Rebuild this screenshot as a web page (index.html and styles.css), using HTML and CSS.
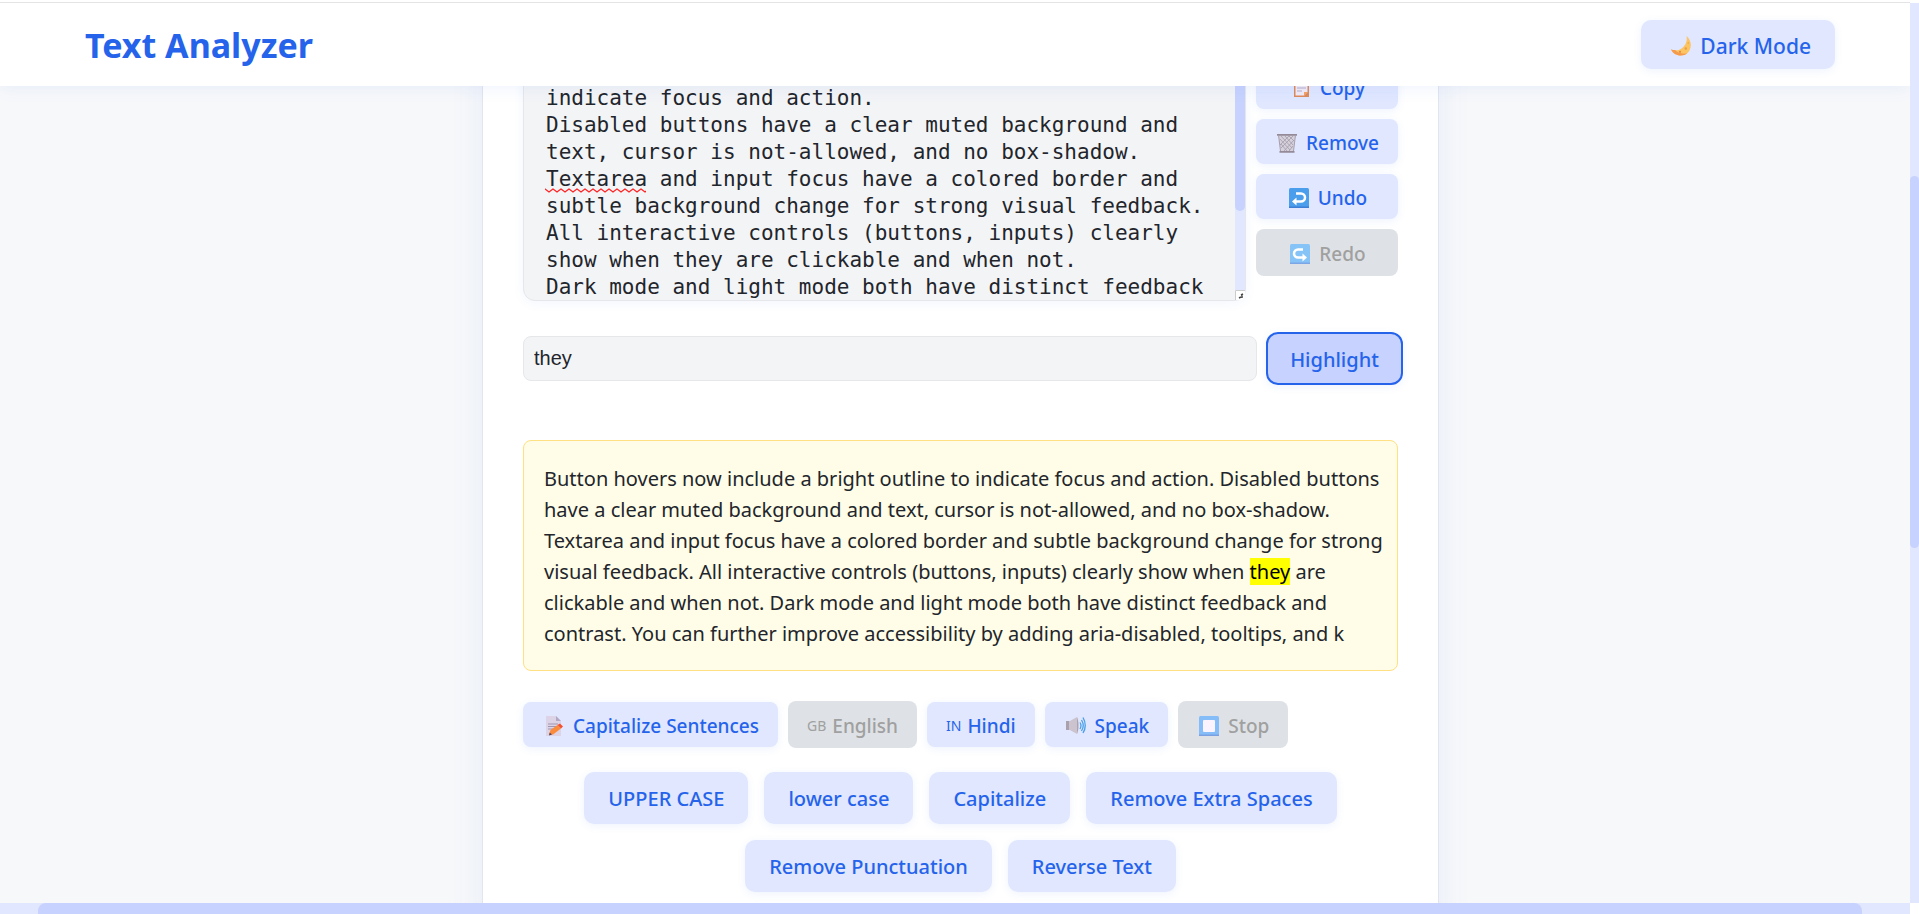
FILE: index.html
```html
<!DOCTYPE html>
<html lang="en">
<head>
<meta charset="utf-8">
<title>Text Analyzer</title>
<link rel="stylesheet" href="styles.css">
</head>
<body>
<div class="window">
  <div class="view">
    <header class="header">
      <h1 class="brand">Text Analyzer</h1>
      <button class="btn btn-theme" type="button">
        <svg class="icon" viewBox="0 0 20 20" aria-hidden="true"><path d="M15.5 0C18.500 2.500 20 6 19.800 9.500 19.500 15.300 15.500 19.500 9.800 19.500 5.300 19.500 1.800 17.300 0 13.500c4 1.500 8.600 1 11.800-2C15 8.500 16.500 4.500 15.500 0z" fill="#fcc462"/><path d="M0 13.500c1.800 3.800 5.300 6 9.800 6 2.500 0 4.800-.8 6.500-2.200-4.500 1-9.500 0-12.300-3.200-1.500 0-2.800-.1-4-.6z" fill="#f59a4c"/><circle cx="14.800" cy="12.500" r="1.200" fill="#e9a04a"/><circle cx="9" cy="15.800" r="1.100" fill="#e58c3f"/><circle cx="17.300" cy="7" r=".9" fill="#eeae55"/></svg>
        Dark Mode
      </button>
    </header>
    <main class="main">
      <section class="card">
        <div class="editor">
          <div class="editor-field">
            <textarea class="editor-text" aria-label="Text to analyze" spellcheck="false">Button hovers now include a bright outline to
indicate focus and action.
Disabled buttons have a clear muted background and
text, cursor is not-allowed, and no box-shadow.
Textarea and input focus have a colored border and
subtle background change for strong visual feedback.
All interactive controls (buttons, inputs) clearly
show when they are clickable and when not.
Dark mode and light mode both have distinct feedback</textarea>
            <svg class="squiggle" aria-hidden="true"><defs><pattern id="wave" width="8" height="5" patternUnits="userSpaceOnUse"><path d="M-1 0L0 1 4 4 8 1 9 0" fill="none" stroke="#f22" stroke-width="1.300"/></pattern></defs><rect width="100%" height="5" fill="url(#wave)"/></svg>
            <div class="editor-scroll"><div class="editor-thumb"></div></div>
            <svg class="grip" viewBox="0 0 10 10" aria-hidden="true"><path d="M0 0h10v4a6 6 0 0 1-6 6H0z" fill="#fff"/><path d="M.5 10V.5H10" fill="none" stroke="#ccc"/><path d="M4 8l2-1M6 5l2-1M7 8V5.500" stroke="#444" stroke-width="1.500"/></svg>
          </div>
          <div class="tools">
            <button class="btn btn-small" type="button"><svg class="icon" viewBox="0 0 20 20" aria-hidden="true"><path d="M3 1h15v18H3z" fill="#dc8a5b"/><path d="M4.500 2.500h12V14L13 17.500H4.500z" fill="#f1ebf7"/><path d="M6 7h9M6 10h9M6 13h5" stroke="#b7adc8"/><path d="M13 18v-4h4z" fill="#f5a164"/></svg>Copy</button>
            <button class="btn btn-small" type="button"><svg class="icon" viewBox="0 0 20 20" aria-hidden="true"><path d="M1.500 2h17l-2 16h-13z" fill="#d5d0da"/><path d="M4 3l11 12M8 3l8 9M12 3l5 5M3 6l10 11M4 11l6 7M16 3L4 15M12 3L3 12M17 7L7 18M16 13l-4 5" stroke="#a29aa9" stroke-width=".8"/><path d="M0 1.800h20M2.500 18.800h15" stroke="#948b99" stroke-width="1.800"/><path d="M1.500 2l2 16M18.500 2l-2 16" stroke="#a79eac"/></svg>Remove</button>
            <button class="btn btn-small" type="button"><svg class="icon" viewBox="0 0 20 20" aria-hidden="true"><rect width="20" height="20" rx="1.500" fill="#4b9eeb"/><path d="M0 18.500h20V20H0z" fill="#3c7fd4"/><path d="M7 5.500h5a3.500 3.500 0 0 1 0 8H6" fill="none" stroke="#fff" stroke-width="2.500"/><path d="M3 13.500l4.500-4v8z" fill="#fff"/></svg>Undo</button>
            <button class="btn btn-small" type="button" disabled><svg class="icon" viewBox="0 0 20 20" aria-hidden="true"><rect width="20" height="20" rx="1.500" fill="#86c4f8"/><path d="M0 18.500h20V20H0z" fill="#7da6e6"/><path d="M13 5.500H8a3.500 3.500 0 0 0 0 8h6" fill="none" stroke="#fff" stroke-width="2.500"/><path d="M17 13.500l-4.500-4v8z" fill="#fff"/></svg>Redo</button>
          </div>
        </div>
        <form class="search" onsubmit="return false">
          <input class="search-input" type="text" value="they" aria-label="Word to highlight" spellcheck="false">
          <button class="btn btn-highlight" type="button">Highlight</button>
        </form>
        <p class="result">Button hovers now include a bright outline to indicate focus and action. Disabled buttons<br>have a clear muted background and text, cursor is not-allowed, and no box-shadow.<br>Textarea and input focus have a colored border and subtle background change for strong<br>visual feedback. All interactive controls (buttons, inputs) clearly show when <mark class="hit">they</mark> are<br>clickable and when not. Dark mode and light mode both have distinct feedback and<br>contrast. You can further improve accessibility by adding aria-disabled, tooltips, and k</p>
        <div class="actions">
          <button class="btn btn-small" type="button"><svg class="icon" viewBox="0 0 20 20" aria-hidden="true"><path d="M2 0h10l5 5v15H2z" fill="#dcd4e6"/><path d="M12 0l5 5h-5z" fill="#b3a8c4"/><path d="M4 8h10M4 10.500h9M4 13h5" stroke="#a095b0"/><path d="M5 19l1.500-5 7-5 3.500 3.500-8 6z" fill="#fb8b3c"/><path d="M13.500 9l2.500-1.500 3 3-2 2z" fill="#f4512f"/><path d="M5 19.500l.7-3 2.300 2z" fill="#59425a"/></svg>Capitalize Sentences</button>
          <button class="btn btn-small" type="button" disabled><span class="flag">GB</span>English</button>
          <button class="btn btn-small" type="button"><span class="flag">IN</span>Hindi</button>
          <button class="btn btn-small" type="button"><svg class="icon" viewBox="0 0 20 20" aria-hidden="true"><path d="M0 5h4l7-4v17l-7-4H0z" fill="#cbc3ce"/><path d="M0 5h3v9H0z" fill="#aaa1ad"/><path d="M11 1v17c2-4 2-13 0-17z" fill="#aba3b2"/><path d="M14 6.500q2 3 0 6.500M15.500 4q3.500 5.500 0 11M17 1.500q4.500 8 0 15.500" fill="none" stroke="#479fe9" stroke-width="1.300"/></svg>Speak</button>
          <button class="btn btn-small" type="button" disabled><svg class="icon" viewBox="0 0 20 20" aria-hidden="true"><rect width="20" height="20" rx="1.500" fill="#84bdf7"/><path d="M0 18.500h20V20H0z" fill="#7ba0e2"/><rect x="4" y="4" width="12" height="12" rx="1" fill="#fbf3fd"/></svg>Stop</button>
        </div>
        <div class="transforms">
          <button class="btn" type="button">UPPER CASE</button>
          <button class="btn" type="button">lower case</button>
          <button class="btn" type="button">Capitalize</button>
          <button class="btn" type="button">Remove Extra Spaces</button>
          <button class="btn" type="button">Remove Punctuation</button>
          <button class="btn" type="button">Reverse Text</button>
        </div>
      </section>
    </main>
  </div>
  <div class="vbar"><div class="vbar-thumb"></div></div>
  <div class="hbar"><div class="hbar-thumb"></div></div>
</div>
</body>
</html>
```
FILE: styles.css
```css
* { box-sizing: border-box; }

body {
  margin: 0;
  background: #fff;
  color: #22252b;
  font-family: "Noto Sans", "Open Sans", sans-serif;
}

.window {
  display: grid;
  grid-template-columns: minmax(0, 1fr) 9px;
  grid-template-rows: minmax(0, 1fr) 11px;
  height: 100vh;
  padding-top: 2px;
}

.view {
  display: flex;
  flex-direction: column;
  overflow: hidden;
  border-top: 1px solid #e3e4e6;
  background: #f7f8fa;
}

.header {
  position: relative;
  z-index: 1;
  display: flex;
  flex: none;
  align-items: center;
  justify-content: space-between;
  padding: 17px 75px 17px 85px;
  background: #fff;
  box-shadow: 0 2px 16px rgba(37, 99, 235, 0.08);
}

.brand {
  margin: 0;
  color: #2563eb;
  font-size: 34px;
  line-height: 44px;
  font-weight: 700;
}

.main {
  flex: 1;
  min-height: 0;
  padding-left: 11px;
}

.card {
  max-width: 957px;
  min-height: 100%;
  margin: -91px auto 0;
  padding: 40px;
  border: 1px solid #e1e6ee;
  background: #fff;
  box-shadow: 0 4px 32px rgba(37, 99, 235, 0.08);
}

.btn {
  display: inline-flex;
  align-items: center;
  justify-content: center;
  gap: 9px;
  padding: 13px 24px 11px;
  border: 0;
  border-radius: 10px;
  background: #e0e7ff;
  box-shadow: 0 2px 8px rgba(37, 99, 235, 0.08);
  color: #2563eb;
  font-family: inherit;
  font-size: 20px;
  line-height: 28px;
  font-weight: 500;
  white-space: nowrap;
}

.btn-theme {
  padding: 12px 24px 9px 28px;
  font-size: 21px;
}

.btn-small {
  padding: 11px 19px 8px;
  border-radius: 8px;
  font-size: 19px;
  line-height: 26px;
}

.btn:disabled {
  padding-top: 12px;
  padding-bottom: 9px;
  background: #dee2e6;
  box-shadow: none;
  color: #a0a0a0;
}

.icon {
  flex: none;
  width: 20px;
  height: 20px;
  margin-left: 2px;
}

.flag {
  margin-right: -3px;
  font-size: 14px;
  font-weight: 400;
}

.editor {
  display: flex;
  align-items: flex-end;
  gap: 10px;
}

.editor-field {
  position: relative;
  flex: 1;
}

.editor-text {
  display: block;
  width: 100%;
  height: 265px;
  padding: 21px 22px 0;
  overflow: hidden;
  resize: none;
  border: 1px solid #e5e7eb;
  border-radius: 12px;
  outline: 0;
  background: #f3f4f6;
  box-shadow: 0 2px 12px rgba(37, 99, 235, 0.06);
  color: #22252b;
  font-family: "DejaVu Sans Mono", monospace;
  font-size: 21px;
  line-height: 27px;
  white-space: pre;
}

.squiggle {
  position: absolute;
  top: 152px;
  left: 22px;
  width: 101px;
  height: 5px;
}

.editor-scroll {
  position: absolute;
  top: 12px;
  right: 1px;
  bottom: 11px;
  width: 10px;
  background: #e0e7ff;
}

.editor-thumb {
  height: 163px;
  border-radius: 5px;
  background: #c7d2fe;
}

.grip {
  position: absolute;
  right: 1px;
  bottom: 1px;
  width: 10px;
  height: 10px;
}

.tools {
  display: flex;
  flex-direction: column;
  gap: 10px;
  width: 142px;
  padding-bottom: 25px;
}

.search {
  display: grid;
  grid-template-columns: minmax(0, 1fr) 137px;
  align-items: center;
  gap: 9px;
  margin: 31px -5px 0 0;
}

.search-input {
  height: 45px;
  padding: 0 10px;
  border: 1px solid #e5e7eb;
  border-radius: 8px;
  outline: 0;
  background: #f3f4f6;
  color: #22252b;
  font-family: "Liberation Sans", Arial, sans-serif;
  font-size: 20px;
}

.btn-highlight {
  border: 2px solid #2563eb;
  border-radius: 12px;
  padding: 12px 16px 9px;
  background: #c7d2fe;
}

.result {
  margin: 55px 0 0;
  padding: 22px 20px 21px;
  border: 1px solid #ffe082;
  border-radius: 8px;
  background: #fffde7;
  font-size: 20px;
  line-height: 31px;
  white-space: nowrap;
}

.hit {
  background: #ff0;
  color: #000;
}

.actions {
  display: flex;
  flex-wrap: wrap;
  align-items: center;
  gap: 10px;
  margin-top: 30px;
}

.transforms {
  display: flex;
  flex-wrap: wrap;
  justify-content: center;
  gap: 16px;
  margin-top: 24px;
}

.vbar {
  margin-top: 1px;
  padding-top: 173px;
  background: #e0e7ff;
}

.vbar-thumb {
  height: 372px;
  border-radius: 5px;
  background: #c7d2fe;
}

.hbar {
  padding: 0 48px 0 38px;
  background: #e0e7ff;
}

.hbar-thumb {
  height: 11px;
  border-radius: 8px 8px 0 0;
  background: #c7d2fe;
}
```
